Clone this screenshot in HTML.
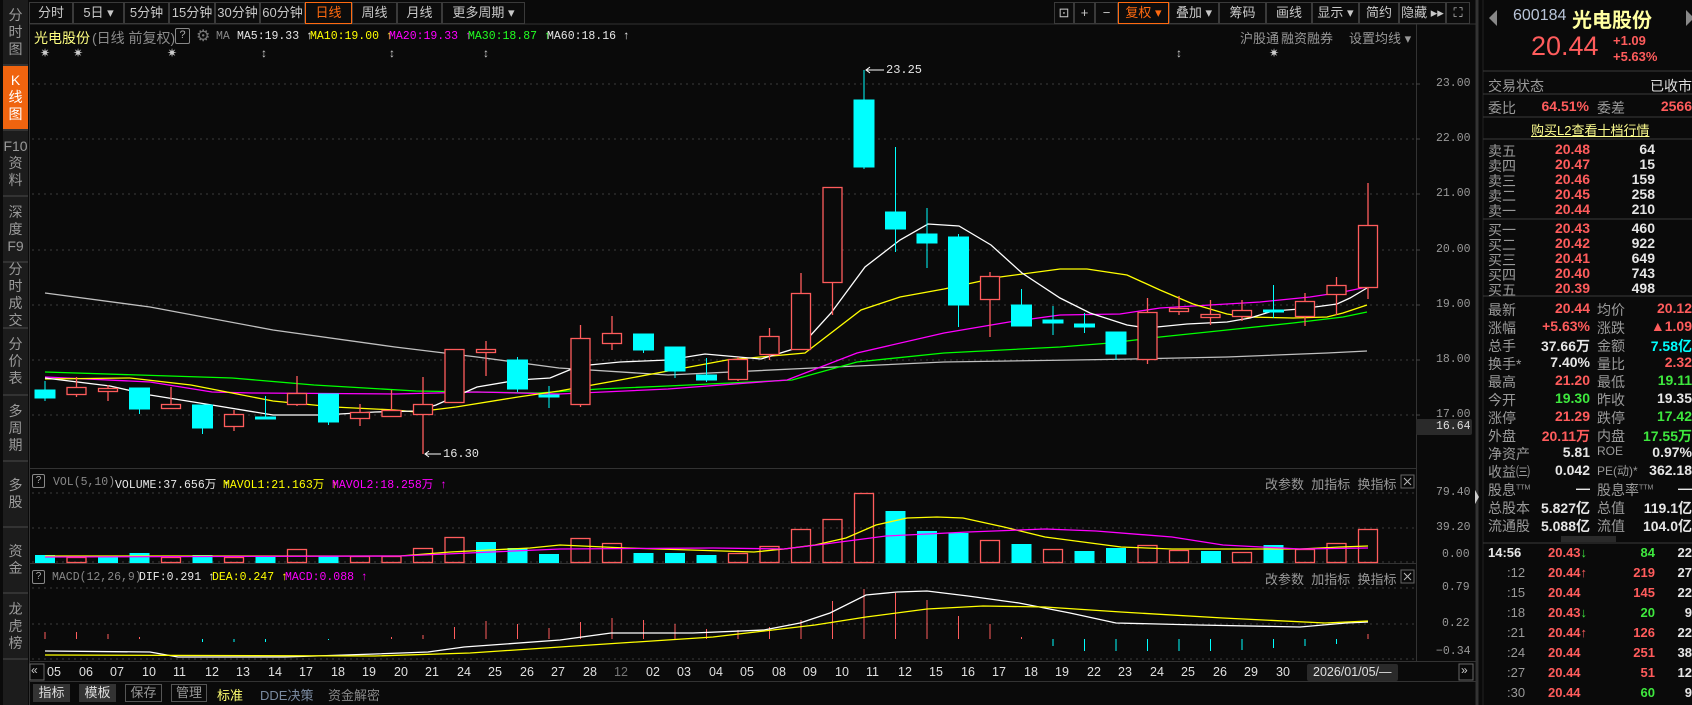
<!DOCTYPE html>
<html><head><meta charset="utf-8">
<style>
*{margin:0;padding:0;box-sizing:border-box}
body{width:1692px;height:705px;background:#0a0a0a;overflow:hidden;position:relative;font-family:"Liberation Sans","Noto Sans CJK SC",sans-serif;color:#b4b4b4}
.a{position:absolute;white-space:nowrap}
.tab{position:absolute;top:2px;height:22px;border:1px solid #3a3a3a;color:#c8c8c8;font-size:13px;line-height:20px;text-align:center;background:#0c0c0c}
.side{position:absolute;left:3px;width:25px;background:#1c1c1c;border-bottom:2px solid #333;color:#9a9a9a;font-size:14px;line-height:17px;text-align:center;display:flex;flex-direction:column;justify-content:center}
.m{font-family:"Liberation Mono","Noto Sans CJK SC",monospace;font-size:11.5px}
.r{color:#ff5c5c}.g{color:#3ee83e}.w{color:#e6e6e6}.c{color:#00ffff}.y{color:#ffff00}.p{color:#ff00ff}
.lb{position:absolute;left:1488px;font-size:14px;color:#9a9a9a}
.v{position:absolute;font-size:14px;font-weight:bold;text-align:right}
</style></head><body>
<svg class="a" style="left:0;top:0" width="1692" height="705">
<!-- frames -->
<line x1="30" y1="24" x2="1476" y2="24" stroke="#333"/>
<line x1="30" y1="468.5" x2="1416" y2="468.5" stroke="#333"/>
<line x1="30" y1="563.5" x2="1416" y2="563.5" stroke="#333"/>
<line x1="30" y1="661.5" x2="1476" y2="661.5" stroke="#333"/>
<line x1="30" y1="681.5" x2="1476" y2="681.5" stroke="#333"/>
<line x1="1416.5" y1="24" x2="1416.5" y2="661" stroke="#333"/>
<line x1="1477" y1="0" x2="1477" y2="705" stroke="#333" stroke-width="3"/>
<line x1="1483" y1="0" x2="1483" y2="705" stroke="#222"/>
<line x1="29.5" y1="24" x2="29.5" y2="705" stroke="#333"/>
<polygon points="1475,490 1479,497 1475,504" fill="#ccc"/>
<!-- grid -->
<g stroke="#3c3c3c" stroke-dasharray="2,4">
<line x1="32" y1="84" x2="1416" y2="84"/><line x1="32" y1="139" x2="1416" y2="139"/><line x1="32" y1="194" x2="1416" y2="194"/><line x1="32" y1="250" x2="1416" y2="250"/><line x1="32" y1="305" x2="1416" y2="305"/><line x1="32" y1="360" x2="1416" y2="360"/><line x1="32" y1="415" x2="1416" y2="415"/>
<line x1="32" y1="493" x2="1416" y2="493"/><line x1="32" y1="528" x2="1416" y2="528"/><line x1="32" y1="562" x2="1416" y2="562"/>
<line x1="32" y1="588" x2="1416" y2="588"/><line x1="32" y1="624" x2="1416" y2="624"/><line x1="32" y1="659" x2="1416" y2="659"/>
</g>
<!-- MA lines -->
<g fill="none" stroke-width="1.3">
<polyline stroke="#c0c0c0" points="45,293 150,307 273,330 395,347 477,357 559,368 668,375 813,368 944,362 1074,360 1133,359 1227,357 1327,353 1367,351"/>
<polyline stroke="#00ff00" points="45,372 232,378 314,385 416,391 538,393 599,389 668,386 792,380 857,362 944,353 1060,347 1110,343 1160,337 1227,330 1293,323 1343,317 1367,312"/>
<polyline stroke="#ff00ff" points="45,377 150,382 212,392 252,393 395,394 477,392 559,394 668,389 787,380 857,353 944,333 1009,322 1060,315 1120,314 1160,308 1210,305 1260,302 1310,297 1343,292 1367,287"/>
<polyline stroke="#ffff00" points="45,379 130,378 191,385 232,393 273,401 334,407 395,410 416,412 456,407 518,397 559,391 620,380 668,371 727,360 805,353 861,310 900,297 944,289 1000,277 1060,269 1087,269 1127,275 1160,290 1193,304 1227,314 1247,317 1293,318 1327,317 1343,313 1367,305"/>
<polyline stroke="#ffffff" points="45,378 110,386 150,395 212,405 273,415 322,415 375,412 416,411 436,405 477,387 518,380 550,378 579,366 620,362 668,360 705,354 761,359 800,347 831,313 865,267 900,240 928,224 959,226 991,245 1022,273 1060,298 1090,313 1127,325 1147,328 1187,324 1227,322 1250,318 1273,311 1300,309 1337,304 1350,298 1367,288"/>
</g>
<!-- candles -->
<g stroke="#00ffff" fill="#00ffff">
<line x1="45" y1="381" x2="45" y2="401"/><rect x="35" y="390" width="20" height="8"/>
<line x1="139.5" y1="388" x2="139.5" y2="414"/><rect x="129.5" y="388" width="20" height="21"/>
<line x1="202.5" y1="405" x2="202.5" y2="434"/><rect x="192.5" y="405" width="20" height="23"/>
<line x1="265.5" y1="396" x2="265.5" y2="419"/><rect x="255.5" y="417" width="20" height="2"/>
<line x1="328.5" y1="394" x2="328.5" y2="425"/><rect x="318.5" y="394" width="20" height="28"/>
<line x1="517.5" y1="357" x2="517.5" y2="392"/><rect x="507.5" y="360" width="20" height="29"/>
<line x1="549" y1="386" x2="549" y2="408"/><rect x="539" y="395" width="20" height="2"/>
<line x1="643.5" y1="334" x2="643.5" y2="353"/><rect x="633.5" y="334" width="20" height="16"/>
<line x1="675" y1="347" x2="675" y2="378"/><rect x="665" y="347" width="20" height="24"/>
<line x1="706.5" y1="358" x2="706.5" y2="382"/><rect x="696.5" y="375" width="20" height="5"/>
<line x1="864" y1="70" x2="864" y2="169"/><rect x="854" y="100" width="20" height="67"/>
<line x1="895.5" y1="147" x2="895.5" y2="252"/><rect x="885.5" y="212" width="20" height="17"/>
<line x1="927" y1="208" x2="927" y2="268"/><rect x="917" y="234" width="20" height="9"/>
<line x1="958.5" y1="234" x2="958.5" y2="327"/><rect x="948.5" y="237" width="20" height="68"/>
<line x1="1021.5" y1="289" x2="1021.5" y2="326"/><rect x="1011.5" y="305" width="20" height="21"/>
<line x1="1053" y1="306" x2="1053" y2="335"/><rect x="1043" y="320" width="20" height="3"/>
<line x1="1084.5" y1="313" x2="1084.5" y2="333"/><rect x="1074.5" y="324" width="20" height="3"/>
<line x1="1116" y1="332" x2="1116" y2="360"/><rect x="1106" y="332" width="20" height="22"/>
<line x1="1273.5" y1="285" x2="1273.5" y2="318"/><rect x="1263.5" y="310" width="20" height="2"/>
</g>
<g stroke="#ff5c5c" fill="#0a0a0a" stroke-width="1.3">
<line x1="76.5" y1="377" x2="76.5" y2="397"/><rect x="67" y="387.5" width="19" height="7"/>
<line x1="108" y1="385" x2="108" y2="401"/><rect x="98.5" y="388.5" width="19" height="3"/>
<line x1="171" y1="387" x2="171" y2="408"/><rect x="161.5" y="404.5" width="19" height="4"/>
<line x1="234" y1="410" x2="234" y2="431"/><rect x="224.5" y="414.5" width="19" height="12"/>
<line x1="297" y1="376" x2="297" y2="406"/><rect x="287.5" y="393.5" width="19" height="11"/>
<line x1="360" y1="404" x2="360" y2="426"/><rect x="350.5" y="412.5" width="19" height="6"/>
<line x1="391.5" y1="390" x2="391.5" y2="417"/><rect x="382" y="410.5" width="19" height="6"/>
<line x1="423" y1="377" x2="423" y2="454"/><rect x="413.5" y="404.5" width="19" height="10"/>
<rect x="445" y="349.5" width="19" height="53"/>
<line x1="486" y1="341" x2="486" y2="376"/><rect x="476.5" y="349.5" width="19" height="3"/>
<line x1="580.5" y1="325" x2="580.5" y2="407"/><rect x="571" y="338.5" width="19" height="66"/>
<line x1="612" y1="316" x2="612" y2="350"/><rect x="602.5" y="333.5" width="19" height="10"/>
<line x1="738" y1="357" x2="738" y2="381"/><rect x="728.5" y="359.5" width="19" height="20"/>
<line x1="769.5" y1="328" x2="769.5" y2="360"/><rect x="760" y="336.5" width="19" height="18"/>
<line x1="801" y1="273" x2="801" y2="350"/><rect x="791.5" y="293.5" width="19" height="56"/>
<line x1="832.5" y1="187" x2="832.5" y2="315"/><rect x="823" y="187.5" width="19" height="95"/>
<line x1="990" y1="272" x2="990" y2="337"/><rect x="980.5" y="276.5" width="19" height="23"/>
<line x1="1147.5" y1="298" x2="1147.5" y2="364"/><rect x="1138" y="312.5" width="19" height="47"/>
<line x1="1179" y1="296" x2="1179" y2="315"/><rect x="1169.5" y="308.5" width="19" height="3"/>
<line x1="1210.5" y1="300" x2="1210.5" y2="325"/><rect x="1201" y="314.5" width="19" height="3"/>
<line x1="1242" y1="300" x2="1242" y2="321"/><rect x="1232.5" y="310.5" width="19" height="6"/>
<line x1="1305" y1="293" x2="1305" y2="326"/><rect x="1295.5" y="301.5" width="19" height="15"/>
<line x1="1336.5" y1="277" x2="1336.5" y2="315"/><rect x="1327" y="285.5" width="19" height="9"/>
<line x1="1368" y1="183" x2="1368" y2="299"/><rect x="1358.5" y="225.5" width="19" height="62"/>
</g>
<g stroke="#fff" fill="none"><line x1="866" y1="70" x2="884" y2="70"/><polyline points="870,67 866,70 870,73"/><line x1="425" y1="454" x2="441" y2="454"/><polyline points="429,451 425,454 429,457"/></g>
<!-- volume -->
<g fill="#00ffff">
<rect x="35" y="555" width="20" height="8"/><rect x="98" y="557" width="20" height="6"/><rect x="129.5" y="553" width="20" height="10"/><rect x="192.5" y="555" width="20" height="8"/><rect x="255.5" y="557" width="20" height="6"/><rect x="318.5" y="556" width="20" height="7"/><rect x="476" y="542" width="20" height="21"/><rect x="507.5" y="548" width="20" height="15"/><rect x="539" y="554" width="20" height="9"/><rect x="633.5" y="553" width="20" height="10"/><rect x="665" y="553" width="20" height="10"/><rect x="696.5" y="555" width="20" height="8"/><rect x="885.5" y="511" width="20" height="52"/><rect x="917" y="531" width="20" height="32"/><rect x="948.5" y="533" width="20" height="30"/><rect x="1011.5" y="544" width="20" height="19"/><rect x="1074.5" y="551" width="20" height="12"/><rect x="1106" y="548" width="20" height="15"/><rect x="1201" y="551" width="20" height="12"/><rect x="1263.5" y="545" width="20" height="18"/>
</g>
<g stroke="#ff5c5c" fill="none" stroke-width="1.3">
<rect x="67" y="557.5" width="19" height="5"/><rect x="161.5" y="557.5" width="19" height="5"/><rect x="224.5" y="557.5" width="19" height="5"/><rect x="287.5" y="549.5" width="19" height="13"/><rect x="350.5" y="556.5" width="19" height="6"/><rect x="382" y="556.5" width="19" height="6"/><rect x="413.5" y="548.5" width="19" height="14"/><rect x="445" y="537.5" width="19" height="25"/><rect x="571" y="538.5" width="19" height="24"/><rect x="602.5" y="543.5" width="19" height="19"/><rect x="728.5" y="553.5" width="19" height="9"/><rect x="760" y="546.5" width="19" height="16"/><rect x="791.5" y="529.5" width="19" height="33"/><rect x="823" y="519.5" width="19" height="43"/><rect x="854.5" y="493.5" width="19" height="69"/><rect x="980.5" y="540.5" width="19" height="22"/><rect x="1043.5" y="549.5" width="19" height="13"/><rect x="1138" y="545.5" width="19" height="17"/><rect x="1169.5" y="550.5" width="19" height="12"/><rect x="1232.5" y="552.5" width="19" height="10"/><rect x="1295.5" y="549.5" width="19" height="13"/><rect x="1327" y="543.5" width="19" height="19"/><rect x="1358.5" y="529.5" width="19" height="33"/>
</g>
<g fill="none" stroke-width="1.3">
<polyline stroke="#ffff00" points="45,556 400,556 450,552 530,548 560,545 626,548 754,552 784,549 815,545 846,538 876,525 907,518 937,517 963,518 1004,527 1045,537 1121,547 1172,549 1300,549 1340,547 1368,546"/>
<polyline stroke="#ff00ff" points="45,557 400,556 560,549 713,548 784,549 825,544 886,536 968,532 1045,529 1096,531 1172,537 1223,545 1300,549 1368,548"/>
</g>
<!-- macd -->
<g stroke="#ff5c5c">
<line x1="45" y1="632" x2="45" y2="639"/><line x1="76.5" y1="632" x2="76.5" y2="639"/><line x1="108" y1="634" x2="108" y2="639"/><line x1="139.5" y1="637" x2="139.5" y2="639"/><line x1="391.5" y1="637" x2="391.5" y2="639"/><line x1="423" y1="635" x2="423" y2="639"/><line x1="454.5" y1="627" x2="454.5" y2="639"/><line x1="486" y1="621" x2="486" y2="639"/><line x1="517.5" y1="624" x2="517.5" y2="639"/><line x1="549" y1="628" x2="549" y2="639"/><line x1="580.5" y1="622" x2="580.5" y2="639"/><line x1="612" y1="618" x2="612" y2="639"/><line x1="643.5" y1="620" x2="643.5" y2="639"/><line x1="675" y1="624" x2="675" y2="639"/><line x1="706.5" y1="629" x2="706.5" y2="639"/><line x1="738" y1="630" x2="738" y2="639"/><line x1="769.5" y1="627" x2="769.5" y2="639"/><line x1="801" y1="620" x2="801" y2="639"/><line x1="832.5" y1="601" x2="832.5" y2="639"/><line x1="864" y1="589" x2="864" y2="639"/><line x1="895.5" y1="593" x2="895.5" y2="639"/><line x1="927" y1="600" x2="927" y2="639"/><line x1="958.5" y1="616" x2="958.5" y2="639"/><line x1="990" y1="624" x2="990" y2="639"/><line x1="1021.5" y1="637" x2="1021.5" y2="639"/><line x1="1368" y1="634" x2="1368" y2="639"/>
</g>
<g stroke="#00ffff">
<line x1="202.5" y1="639" x2="202.5" y2="642"/><line x1="234" y1="639" x2="234" y2="642"/><line x1="265.5" y1="639" x2="265.5" y2="642"/><line x1="328.5" y1="639" x2="328.5" y2="640"/><line x1="1053" y1="639" x2="1053" y2="646"/><line x1="1084.5" y1="639" x2="1084.5" y2="651"/><line x1="1116" y1="639" x2="1116" y2="651"/><line x1="1147.5" y1="639" x2="1147.5" y2="651"/><line x1="1179" y1="639" x2="1179" y2="651"/><line x1="1210.5" y1="639" x2="1210.5" y2="651"/><line x1="1242" y1="639" x2="1242" y2="650"/><line x1="1273.5" y1="639" x2="1273.5" y2="648"/><line x1="1305" y1="639" x2="1305" y2="646"/><line x1="1336.5" y1="639" x2="1336.5" y2="644"/>
</g>
<g fill="none" stroke-width="1.3">
<polyline stroke="#ffffff" points="45,651 150,652 178,657 285,657 375,654 428,652 464,647 560,640 611,633 693,633 764,630 800,623 830,613 866,595 897,592 927,591 968,596 1019,603 1070,613 1116,623 1198,625 1300,627 1346,623 1368,622"/>
<polyline stroke="#ffff00" points="45,655 375,656 470,653 560,647 713,637 815,625 866,617 927,609 983,606 1045,607 1121,612 1223,618 1325,623 1368,621"/>
</g>
<!-- axis ticks -->
<g stroke="#444"><line x1="1416" y1="84" x2="1420" y2="84"/><line x1="1416" y1="139" x2="1420" y2="139"/><line x1="1416" y1="194" x2="1420" y2="194"/><line x1="1416" y1="250" x2="1420" y2="250"/><line x1="1416" y1="305" x2="1420" y2="305"/><line x1="1416" y1="360" x2="1420" y2="360"/><line x1="1416" y1="415" x2="1420" y2="415"/></g>
<rect x="1416" y="419" width="56" height="16" rx="2" fill="#2a2a2a"/>
<rect x="1307" y="664" width="91" height="17" rx="2" fill="#2a2a2a"/>
<rect x="30" y="664" width="14" height="16" fill="none" stroke="#666"/>
<rect x="1459" y="664" width="14" height="16" fill="none" stroke="#666"/>
<rect x="1401" y="475" width="13" height="13" fill="none" stroke="#666"/>
<rect x="1401" y="570" width="13" height="13" fill="none" stroke="#666"/>
<g stroke="#bbb"><line x1="1404" y1="478" x2="1411" y2="485"/><line x1="1411" y1="478" x2="1404" y2="485"/><line x1="1404" y1="573" x2="1411" y2="580"/><line x1="1411" y1="573" x2="1404" y2="580"/></g>
<!-- right panel lines -->
<g stroke="#3a3a3a"><line x1="1483" y1="71" x2="1692" y2="71"/><line x1="1483" y1="94" x2="1692" y2="94"/><line x1="1483" y1="117" x2="1692" y2="117"/><line x1="1483" y1="139" x2="1692" y2="139"/><line x1="1483" y1="219" x2="1692" y2="219"/><line x1="1483" y1="296" x2="1692" y2="296"/><line x1="1483" y1="543" x2="1692" y2="543"/></g>
<rect x="1561" y="536" width="55" height="6" fill="#2a2a2a"/>
<polygon points="1489,18 1497,10 1497,26" fill="#888"/>
<polygon points="1686,10 1692,16 1692,20 1686,26" fill="#888"/>
</svg>

<!-- sidebar -->
<div class="side" style="top:0;height:66px">分<br>时<br>图</div>
<div class="side" style="top:66px;height:65px;background:#f0640f;color:#fff">K<br>线<br>图</div>
<div class="side" style="top:131px;height:66px">F10<br>资<br>料</div>
<div class="side" style="top:197px;height:66px">深<br>度<br>F9</div>
<div class="side" style="top:263px;height:66px">分<br>时<br>成<br>交</div>
<div class="side" style="top:329px;height:67px">分<br>价<br>表</div>
<div class="side" style="top:396px;height:66px">多<br>周<br>期</div>
<div class="side" style="top:462px;height:66px">多<br>股</div>
<div class="side" style="top:528px;height:66px">资<br>金</div>
<div class="side" style="top:594px;height:66px">龙<br>虎<br>榜</div>
<div class="side" style="top:660px;height:45px;border:0"></div>

<!-- top tabs -->
<div class="tab" style="left:29px;width:44px">分时</div>
<div class="tab" style="left:73px;width:51px">5日 ▾</div>
<div class="tab" style="left:124px;width:45px">5分钟</div>
<div class="tab" style="left:169px;width:46px">15分钟</div>
<div class="tab" style="left:215px;width:45px">30分钟</div>
<div class="tab" style="left:260px;width:45px">60分钟</div>
<div class="tab" style="left:305px;width:47px;border-color:#ff6a10;color:#ff6a10">日线</div>
<div class="tab" style="left:352px;width:45px">周线</div>
<div class="tab" style="left:397px;width:45px">月线</div>
<div class="tab" style="left:442px;width:83px">更多周期 ▾</div>
<div class="tab" style="left:1054px;width:20px">⊡</div>
<div class="tab" style="left:1074px;width:21px">+</div>
<div class="tab" style="left:1095px;width:23px">−</div>
<div class="tab" style="left:1118px;width:51px;border-color:#ff6a10;color:#ff6a10">复权 ▾</div>
<div class="tab" style="left:1169px;width:50px">叠加 ▾</div>
<div class="tab" style="left:1219px;width:47px">筹码</div>
<div class="tab" style="left:1266px;width:46px">画线</div>
<div class="tab" style="left:1312px;width:47px">显示 ▾</div>
<div class="tab" style="left:1359px;width:40px">简约</div>
<div class="tab" style="left:1399px;width:47px">隐藏 ▸▸</div>
<div class="tab" style="left:1446px;width:24px">⛶</div>

<!-- chart header -->
<div class="a" style="left:34px;top:28px;font-size:14px;color:#ffff80">光电股份</div>
<div class="a" style="left:92px;top:28px;font-size:14px;color:#8a8a8a">(日线 前复权)</div>
<div class="a" style="left:175px;top:28px;width:15px;height:16px;border:1px solid #888;border-radius:2px;font-size:11px;text-align:center;color:#aaa">?</div>
<div class="a" style="left:196px;top:26px;font-size:16px;color:#777">⚙</div>
<div class="a m" style="left:216px;top:30px;color:#888">MA</div>
<div class="a m w" style="left:237px;top:30px">MA5:19.33 ↑</div>
<div class="a m y" style="left:310px;top:30px">MA10:19.00 ↑</div>
<div class="a m p" style="left:389px;top:30px">MA20:19.33 ↑</div>
<div class="a m g" style="left:468px;top:30px;color:#22ff22">MA30:18.87 ↑</div>
<div class="a m w" style="left:547px;top:30px">MA60:18.16 ↑</div>
<div class="a" style="left:1240px;top:28px;font-size:13px;color:#999">沪股通</div>
<div class="a" style="left:1281px;top:28px;font-size:13px;color:#999">融资融券</div>
<div class="a" style="left:1349px;top:28px;font-size:13px;color:#999">设置均线 ▾</div>
<div class="a" style="left:40px;top:46px;font-size:12px;color:#ccc">✷</div>
<div class="a" style="left:73px;top:46px;font-size:12px;color:#ccc">✷</div>
<div class="a" style="left:167px;top:46px;font-size:12px;color:#ccc">✷</div>
<div class="a" style="left:261px;top:46px;font-size:12px;color:#ccc">↕</div>
<div class="a" style="left:389px;top:46px;font-size:12px;color:#ccc">↕</div>
<div class="a" style="left:483px;top:46px;font-size:12px;color:#ccc">↕</div>
<div class="a" style="left:1176px;top:46px;font-size:12px;color:#ccc">↕</div>
<div class="a" style="left:1269px;top:46px;font-size:12px;color:#ccc">✷</div>
<div class="a m w" style="left:886px;top:63px;font-size:12px">23.25</div>
<div class="a m w" style="left:443px;top:447px;font-size:12px">16.30</div>

<!-- price axis -->
<div class="a m" style="left:1436px;top:77px;color:#999">23.00</div>
<div class="a m" style="left:1436px;top:132px;color:#999">22.00</div>
<div class="a m" style="left:1436px;top:187px;color:#999">21.00</div>
<div class="a m" style="left:1436px;top:243px;color:#999">20.00</div>
<div class="a m" style="left:1436px;top:298px;color:#999">19.00</div>
<div class="a m" style="left:1436px;top:353px;color:#999">18.00</div>
<div class="a m" style="left:1436px;top:408px;color:#999">17.00</div>
<div class="a m" style="left:1436px;top:420px;color:#ddd">16.64</div>
<div class="a m" style="left:1436px;top:486px;color:#999">79.40</div>
<div class="a m" style="left:1436px;top:521px;color:#999">39.20</div>
<div class="a m" style="left:1442px;top:548px;color:#999">0.00</div>
<div class="a m" style="left:1442px;top:581px;color:#999">0.79</div>
<div class="a m" style="left:1442px;top:617px;color:#999">0.22</div>
<div class="a m" style="left:1436px;top:645px;color:#999">−0.34</div>

<!-- vol / macd headers -->
<div class="a" style="left:32px;top:474px;width:13px;height:14px;border:1px solid #888;border-radius:2px;font-size:10px;text-align:center;color:#aaa">?</div>
<div class="a m" style="left:53px;top:476px;color:#888">VOL(5,10)</div>
<div class="a m w" style="left:115px;top:476px">VOLUME:37.656万 ↑</div>
<div class="a m y" style="left:223px;top:476px">MAVOL1:21.163万 ↑</div>
<div class="a m p" style="left:332px;top:476px">MAVOL2:18.258万 ↑</div>
<div class="a" style="left:1265px;top:474px;font-size:13px;color:#999">改参数 &nbsp;加指标 &nbsp;换指标</div>
<div class="a" style="left:32px;top:570px;width:13px;height:14px;border:1px solid #888;border-radius:2px;font-size:10px;text-align:center;color:#aaa">?</div>
<div class="a m" style="left:52px;top:571px;color:#888">MACD(12,26,9)</div>
<div class="a m w" style="left:139px;top:571px">DIF:0.291 ↑</div>
<div class="a m y" style="left:212px;top:571px">DEA:0.247 ↑</div>
<div class="a m p" style="left:285px;top:571px">MACD:0.088 ↑</div>
<div class="a" style="left:1265px;top:569px;font-size:13px;color:#999">改参数 &nbsp;加指标 &nbsp;换指标</div>

<!-- dates -->
<div class="a" style="left:31px;top:663px;font-size:12px;color:#ccc">«</div>
<div class="a" style="left:1461px;top:663px;font-size:12px;color:#ccc">»</div>
<div class="a" style="top:665px;left:0;font-size:12.5px;color:#e0e0e0;width:1400px;height:16px">
<span class="a" style="left:47px">05</span><span class="a" style="left:79px">06</span><span class="a" style="left:110px">07</span><span class="a" style="left:142px">10</span><span class="a" style="left:173px">11</span><span class="a" style="left:205px">12</span><span class="a" style="left:236px">13</span><span class="a" style="left:268px">14</span><span class="a" style="left:299px">17</span><span class="a" style="left:331px">18</span><span class="a" style="left:362px">19</span><span class="a" style="left:394px">20</span><span class="a" style="left:425px">21</span><span class="a" style="left:457px">24</span><span class="a" style="left:488px">25</span><span class="a" style="left:520px">26</span><span class="a" style="left:551px">27</span><span class="a" style="left:583px">28</span><span class="a" style="left:614px;color:#777">12</span><span class="a" style="left:646px">02</span><span class="a" style="left:677px">03</span><span class="a" style="left:709px">04</span><span class="a" style="left:740px">05</span><span class="a" style="left:772px">08</span><span class="a" style="left:803px">09</span><span class="a" style="left:835px">10</span><span class="a" style="left:866px">11</span><span class="a" style="left:898px">12</span><span class="a" style="left:929px">15</span><span class="a" style="left:961px">16</span><span class="a" style="left:992px">17</span><span class="a" style="left:1024px">18</span><span class="a" style="left:1055px">19</span><span class="a" style="left:1087px">22</span><span class="a" style="left:1118px">23</span><span class="a" style="left:1150px">24</span><span class="a" style="left:1181px">25</span><span class="a" style="left:1213px">26</span><span class="a" style="left:1244px">29</span><span class="a" style="left:1276px">30</span><span class="a" style="left:1313px">2026/01/05/—</span>
</div>

<!-- bottom tabs -->
<div class="a" style="left:33px;top:684px;width:37px;height:18px;background:#333;font-size:13px;color:#ddd;text-align:center;line-height:18px">指标</div>
<div class="a" style="left:79px;top:684px;width:37px;height:18px;background:#333;font-size:13px;color:#ddd;text-align:center;line-height:18px">模板</div>
<div class="a" style="left:125px;top:684px;width:37px;height:18px;border:1px solid #555;font-size:13px;color:#999;text-align:center;line-height:16px">保存</div>
<div class="a" style="left:171px;top:684px;width:36px;height:18px;border:1px solid #555;font-size:13px;color:#999;text-align:center;line-height:16px">管理</div>
<div class="a" style="left:217px;top:685px;font-size:13px;color:#ffff70">标准</div>
<div class="a" style="left:260px;top:685px;font-size:13px;color:#7a8aa0">DDE决策</div>
<div class="a" style="left:328px;top:685px;font-size:13px;color:#888">资金解密</div>

<!-- right panel -->
<div class="a" style="left:1513px;top:7px;font-size:16px;color:#b8c4d8">600184</div>
<div class="a" style="left:1572px;top:4px;font-size:20px;color:#ffffa0;font-weight:bold">光电股份</div>
<div class="a r" style="left:1531px;top:31px;font-size:27px">20.44</div>
<div class="a r" style="left:1613px;top:33px;font-size:13px;font-weight:bold">+1.09</div>
<div class="a r" style="left:1613px;top:49px;font-size:13px;font-weight:bold">+5.63%</div>

<div class="lb" style="top:76px">交易状态</div><div class="v w" style="right:0;top:76px;font-weight:normal;color:#ddd">已收市</div>
<div class="lb" style="top:98px">委比</div><div class="v r" style="right:103px;top:98px">64.51%</div><div class="a" style="left:1597px;top:98px;font-size:14px;color:#9a9a9a">委差</div><div class="v r" style="right:0;top:98px">2566</div>
<div class="a" style="left:1531px;top:120px;font-size:13px;color:#ffff90;text-decoration:underline">购买L2查看十档行情</div>

<div class="a" style="left:0;top:141px;width:1692px;height:150px">
<div class="lb" style="top:0">卖五</div><div class="v r" style="left:1540px;width:50px;top:0">20.48</div><div class="v w" style="left:1610px;width:45px;top:0">64</div>
<div class="lb" style="top:15px">卖四</div><div class="v r" style="left:1540px;width:50px;top:15px">20.47</div><div class="v w" style="left:1610px;width:45px;top:15px">15</div>
<div class="lb" style="top:30px">卖三</div><div class="v r" style="left:1540px;width:50px;top:30px">20.46</div><div class="v w" style="left:1610px;width:45px;top:30px">159</div>
<div class="lb" style="top:45px">卖二</div><div class="v r" style="left:1540px;width:50px;top:45px">20.45</div><div class="v w" style="left:1610px;width:45px;top:45px">258</div>
<div class="lb" style="top:60px">卖一</div><div class="v r" style="left:1540px;width:50px;top:60px">20.44</div><div class="v w" style="left:1610px;width:45px;top:60px">210</div>
<div class="lb" style="top:79px">买一</div><div class="v r" style="left:1540px;width:50px;top:79px">20.43</div><div class="v w" style="left:1610px;width:45px;top:79px">460</div>
<div class="lb" style="top:94px">买二</div><div class="v r" style="left:1540px;width:50px;top:94px">20.42</div><div class="v w" style="left:1610px;width:45px;top:94px">922</div>
<div class="lb" style="top:109px">买三</div><div class="v r" style="left:1540px;width:50px;top:109px">20.41</div><div class="v w" style="left:1610px;width:45px;top:109px">649</div>
<div class="lb" style="top:124px">买四</div><div class="v r" style="left:1540px;width:50px;top:124px">20.40</div><div class="v w" style="left:1610px;width:45px;top:124px">743</div>
<div class="lb" style="top:139px">买五</div><div class="v r" style="left:1540px;width:50px;top:139px">20.39</div><div class="v w" style="left:1610px;width:45px;top:139px">498</div>
</div>

<div class="a" style="left:0;top:300px;width:1692px;height:240px">
<div class="lb" style="top:0">最新</div><div class="v r" style="left:1520px;width:70px;top:0">20.44</div><div class="lb" style="left:1597px;top:0">均价</div><div class="v r" style="right:0;top:0">20.12</div>
<div class="lb" style="top:18px">涨幅</div><div class="v r" style="left:1520px;width:70px;top:18px">+5.63%</div><div class="lb" style="left:1597px;top:18px">涨跌</div><div class="v r" style="right:0;top:18px">▲1.09</div>
<div class="lb" style="top:36px">总手</div><div class="v w" style="left:1520px;width:70px;top:36px">37.66万</div><div class="lb" style="left:1597px;top:36px">金额</div><div class="v c" style="right:0;top:36px">7.58亿</div>
<div class="lb" style="top:54px">换手*</div><div class="v w" style="left:1520px;width:70px;top:54px">7.40%</div><div class="lb" style="left:1597px;top:54px">量比</div><div class="v r" style="right:0;top:54px">2.32</div>
<div class="lb" style="top:72px">最高</div><div class="v r" style="left:1520px;width:70px;top:72px">21.20</div><div class="lb" style="left:1597px;top:72px">最低</div><div class="v g" style="right:0;top:72px">19.11</div>
<div class="lb" style="top:90px">今开</div><div class="v g" style="left:1520px;width:70px;top:90px">19.30</div><div class="lb" style="left:1597px;top:90px">昨收</div><div class="v w" style="right:0;top:90px">19.35</div>
<div class="lb" style="top:108px">涨停</div><div class="v r" style="left:1520px;width:70px;top:108px">21.29</div><div class="lb" style="left:1597px;top:108px">跌停</div><div class="v g" style="right:0;top:108px">17.42</div>
<div class="lb" style="top:126px">外盘</div><div class="v r" style="left:1520px;width:70px;top:126px">20.11万</div><div class="lb" style="left:1597px;top:126px">内盘</div><div class="v g" style="right:0;top:126px">17.55万</div>
<div class="lb" style="top:144px">净资产</div><div class="v w" style="left:1520px;width:70px;top:144px">5.81</div><div class="lb" style="left:1597px;top:144px;font-size:12px">ROE</div><div class="v w" style="right:0;top:144px">0.97%</div>
<div class="lb" style="top:162px">收益㈢</div><div class="v w" style="left:1520px;width:70px;top:162px">0.042</div><div class="lb" style="left:1597px;top:162px;font-size:12px">PE(动)*</div><div class="v w" style="right:0;top:162px">362.18</div>
<div class="lb" style="top:180px">股息<sup style="font-size:7px">TTM</sup></div><div class="v w" style="left:1520px;width:70px;top:180px">—</div><div class="lb" style="left:1597px;top:180px">股息率<sup style="font-size:7px">TTM</sup></div><div class="v w" style="right:0;top:180px">—</div>
<div class="lb" style="top:198px">总股本</div><div class="v w" style="left:1520px;width:70px;top:198px">5.827亿</div><div class="lb" style="left:1597px;top:198px">总值</div><div class="v w" style="right:0;top:198px">119.1亿</div>
<div class="lb" style="top:216px">流通股</div><div class="v w" style="left:1520px;width:70px;top:216px">5.088亿</div><div class="lb" style="left:1597px;top:216px">流值</div><div class="v w" style="right:0;top:216px">104.0亿</div>
</div>

<div class="a" style="left:0;top:545px;width:1692px;height:160px;font-size:13px;font-weight:bold">
<div class="a w" style="left:1488px;top:0">14:56</div><div class="a r" style="left:1548px;top:0">20.43<span class="g">↓</span></div><div class="v g" style="left:1610px;width:45px;top:0;font-size:13px">84</div><div class="v w" style="right:0;top:0;font-size:13px">22</div>
<div class="a" style="left:1507px;top:20px;color:#999;font-weight:normal">:12</div><div class="a r" style="left:1548px;top:20px">20.44↑</div><div class="v r" style="left:1610px;width:45px;top:20px;font-size:13px">219</div><div class="v w" style="right:0;top:20px;font-size:13px">27</div>
<div class="a" style="left:1507px;top:40px;color:#999;font-weight:normal">:15</div><div class="a r" style="left:1548px;top:40px">20.44</div><div class="v r" style="left:1610px;width:45px;top:40px;font-size:13px">145</div><div class="v w" style="right:0;top:40px;font-size:13px">22</div>
<div class="a" style="left:1507px;top:60px;color:#999;font-weight:normal">:18</div><div class="a r" style="left:1548px;top:60px">20.43<span class="g">↓</span></div><div class="v g" style="left:1610px;width:45px;top:60px;font-size:13px">20</div><div class="v w" style="right:0;top:60px;font-size:13px">9</div>
<div class="a" style="left:1507px;top:80px;color:#999;font-weight:normal">:21</div><div class="a r" style="left:1548px;top:80px">20.44↑</div><div class="v r" style="left:1610px;width:45px;top:80px;font-size:13px">126</div><div class="v w" style="right:0;top:80px;font-size:13px">22</div>
<div class="a" style="left:1507px;top:100px;color:#999;font-weight:normal">:24</div><div class="a r" style="left:1548px;top:100px">20.44</div><div class="v r" style="left:1610px;width:45px;top:100px;font-size:13px">251</div><div class="v w" style="right:0;top:100px;font-size:13px">38</div>
<div class="a" style="left:1507px;top:120px;color:#999;font-weight:normal">:27</div><div class="a r" style="left:1548px;top:120px">20.44</div><div class="v r" style="left:1610px;width:45px;top:120px;font-size:13px">51</div><div class="v w" style="right:0;top:120px;font-size:13px">12</div>
<div class="a" style="left:1507px;top:140px;color:#999;font-weight:normal">:30</div><div class="a r" style="left:1548px;top:140px">20.44</div><div class="v g" style="left:1610px;width:45px;top:140px;font-size:13px">60</div><div class="v w" style="right:0;top:140px;font-size:13px">9</div>
</div>
</body></html>
